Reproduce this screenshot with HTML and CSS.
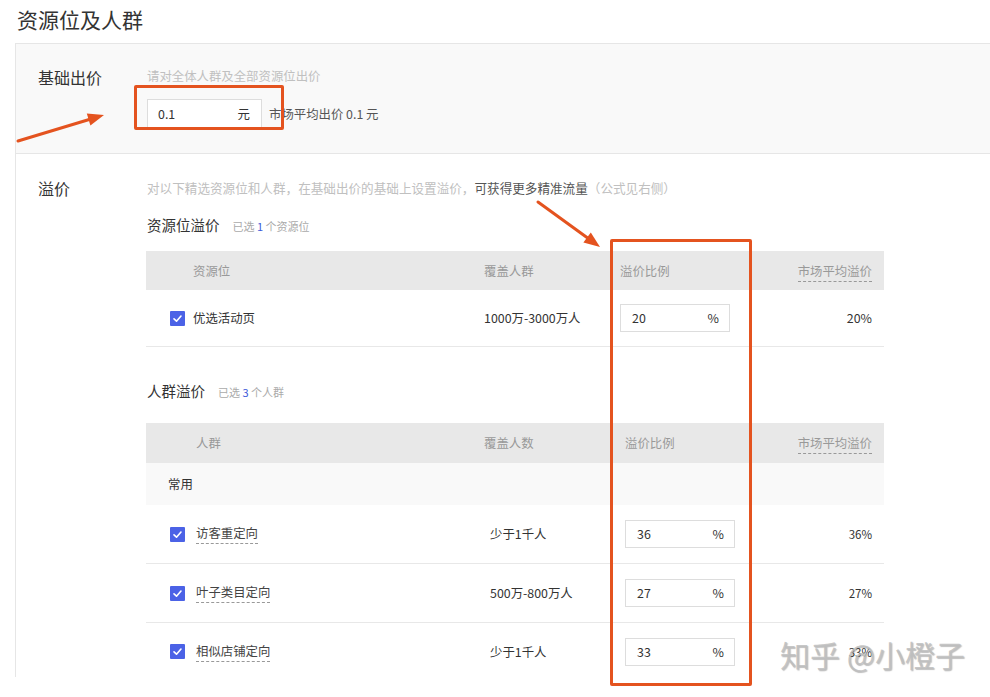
FILE: index.html
```html
<!DOCTYPE html>
<html lang="zh-CN">
<head>
<meta charset="utf-8">
<title>资源位及人群</title>
<link rel="stylesheet" href="styles.css">
</head>
<body>
<div class="page">
  <h1 class="title">资源位及人群</h1>
  <div class="panel">
    <section class="base">
      <div class="label">基础出价</div>
      <div class="content">
        <div class="hint">请对全体人群及全部资源位出价</div>
        <div class="bid-row">
          <div class="input input-base"><span>0.1</span><span>元</span></div>
          <span class="market">市场平均出价 0.1 元</span>
        </div>
      </div>
    </section>
    <section class="premium">
      <div class="label">溢价</div>
      <div class="content">
        <div class="hint hint-premium">对以下精选资源位和人群，在基础出价的基础上设置溢价，<span class="strong">可获得更多精准流量</span>（公式见右侧）</div>

        <div class="sub-title sub-first">资源位溢价<span class="count">已选 <b>1</b> 个资源位</span></div>
        <div class="table t1">
          <div class="row head">
            <div class="cell c1">资源位</div>
            <div class="cell">覆盖人群</div>
            <div class="cell">溢价比例</div>
            <div class="cell c4"><span class="dashed">市场平均溢价</span></div>
          </div>
          <div class="row item">
            <div class="cell c1"><span class="check"><svg viewBox="0 0 15 15" width="15" height="15"><path d="M4 7.8 L6.5 10.2 L11 5" fill="none" stroke="#fff" stroke-width="1.6" stroke-linecap="round" stroke-linejoin="round"/></svg></span><span>优选活动页</span></div>
            <div class="cell">1000万-3000万人</div>
            <div class="cell"><div class="input input-pct"><span>20</span><span>%</span></div></div>
            <div class="cell c4">20%</div>
          </div>
        </div>

        <div class="sub-title sub-second">人群溢价<span class="count">已选 <b>3</b> 个人群</span></div>
        <div class="table t2">
          <div class="row head">
            <div class="cell c1">人群</div>
            <div class="cell">覆盖人数</div>
            <div class="cell">溢价比例</div>
            <div class="cell c4"><span class="dashed">市场平均溢价</span></div>
          </div>
          <div class="group">常用</div>
          <div class="row item">
            <div class="cell c1"><span class="check"><svg viewBox="0 0 15 15" width="15" height="15"><path d="M4 7.8 L6.5 10.2 L11 5" fill="none" stroke="#fff" stroke-width="1.6" stroke-linecap="round" stroke-linejoin="round"/></svg></span><span class="dashed name">访客重定向</span></div>
            <div class="cell data2">少于1千人</div>
            <div class="cell"><div class="input input-pct"><span>36</span><span>%</span></div></div>
            <div class="cell c4 small">36%</div>
          </div>
          <div class="row item">
            <div class="cell c1"><span class="check"><svg viewBox="0 0 15 15" width="15" height="15"><path d="M4 7.8 L6.5 10.2 L11 5" fill="none" stroke="#fff" stroke-width="1.6" stroke-linecap="round" stroke-linejoin="round"/></svg></span><span class="dashed name">叶子类目定向</span></div>
            <div class="cell data2">500万-800万人</div>
            <div class="cell"><div class="input input-pct"><span>27</span><span>%</span></div></div>
            <div class="cell c4 small">27%</div>
          </div>
          <div class="row item last">
            <div class="cell c1"><span class="check"><svg viewBox="0 0 15 15" width="15" height="15"><path d="M4 7.8 L6.5 10.2 L11 5" fill="none" stroke="#fff" stroke-width="1.6" stroke-linecap="round" stroke-linejoin="round"/></svg></span><span class="dashed name">相似店铺定向</span></div>
            <div class="cell data2">少于1千人</div>
            <div class="cell"><div class="input input-pct"><span>33</span><span>%</span></div></div>
            <div class="cell c4 small">33%</div>
          </div>
        </div>
      </div>
    </section>
  </div>

  <div class="annot annot-base"></div>
  <div class="annot annot-col"></div>
  <svg class="arrows" width="990" height="697" viewBox="0 0 990 697">
    <line x1="18" y1="141" x2="90" y2="119.3" stroke="#e4531f" stroke-width="3" stroke-linecap="round"/>
    <polygon points="104,115 90.4,125.6 86.8,113.6" fill="#e4531f"/>
    <line x1="538" y1="202" x2="588" y2="238.3" stroke="#e4531f" stroke-width="3" stroke-linecap="round"/>
    <polygon points="600,247 583.4,242.6 590.8,232.5" fill="#e4531f"/>
  </svg>
  <div class="watermark">知乎 @小橙子</div>
</div>
</body>
</html>
```

FILE: styles.css
```css
* { box-sizing: border-box; }

body {
  margin: 0;
  background: #fff;
  color: #333;
  font-family: "Noto Sans CJK SC", "Noto Sans", "Liberation Sans", sans-serif;
}

.page {
  position: relative;
  width: 990px;
  height: 697px;
  overflow: hidden;
}

.title {
  margin: 0;
  padding: 5px 0 10px 17px;
  font-size: 21px;
  font-weight: normal;
  line-height: 28px;
  color: #333;
}

.panel {
  margin-left: 15px;
  height: 634px;
  border-left: 1px solid #e6e6e6;
  border-top: 1px solid #e6e6e6;
}

.label {
  flex: 0 0 131px;
  padding-left: 22px;
  font-size: 16px;
  line-height: 20px;
  color: #333;
}

.content {
  flex: 1;
}

.base {
  display: flex;
  height: 110px;
  padding-top: 23px;
  background: #f9f9f9;
  border-bottom: 1px solid #e6e6e6;
}

.hint {
  font-size: 12.4px;
  line-height: 18px;
  color: #c0c0c0;
}

.hint-premium {
  font-size: 12.6px;
  line-height: 20px;
}

.hint .strong {
  color: #555;
}

.bid-row {
  display: flex;
  align-items: center;
  gap: 7px;
  margin-top: 14px;
}

.input {
  display: flex;
  align-items: center;
  justify-content: space-between;
  background: #fff;
  border: 1px solid #ddd;
  font-size: 12.4px;
  color: #333;
}

.input-base {
  width: 115px;
  height: 30px;
  padding: 0 11px 0 10px;
}

.market {
  font-size: 12.4px;
  color: #555;
}

.premium {
  display: flex;
  padding-top: 24px;
}

.sub-title {
  display: flex;
  align-items: baseline;
  font-size: 14.5px;
  line-height: 20px;
  color: #333;
}

.sub-first { margin-top: 17px; }
.sub-second { margin-top: 34px; }

.count {
  margin-left: 13px;
  font-size: 11px;
  color: #aaa;
}

.count b {
  font-weight: normal;
  color: #3d5bd9;
}

.table {
  width: 738px;
  margin-left: -1px;
  margin-top: 15px;
  font-size: 12.4px;
}

.t2 { margin-top: 21px; }

.row {
  display: grid;
  align-items: center;
}

.t1 .row { grid-template-columns: 338px 136px 1fr 1fr; }
.t2 .row { grid-template-columns: 338px 141px 1fr 1fr; }

.row.head {
  height: 39px;
  background: #e8e8e8;
  color: #999;
}

.t2 .row.head { height: 40px; }

.row.head .c1 { padding-left: 47px; }
.t2 .row.head .c1 { padding-left: 50px; }

.row.item {
  height: 57px;
  border-bottom: 1px solid #e8e8e8;
}

.t2 .row.item { height: 59px; }
.t2 .row.item.last { height: 57px; border-bottom: none; }

.t2 .cell.data2 { padding-left: 6px; }

.row.item .c1 {
  display: flex;
  align-items: center;
  gap: 8px;
  padding-left: 24px;
  color: #333;
}

.t2 .row.item .c1 { gap: 11px; }

.c4 {
  text-align: right;
  padding-right: 12px;
}

.small { font-size: 11.5px; }

.dashed {
  border-bottom: 1px dashed #999;
  padding-bottom: 1px;
}

.name { color: #444; }

.check {
  display: block;
  width: 15px;
  height: 15px;
  background: #4b62e6;
  border-radius: 1px;
}

.check svg { display: block; }

.input-pct {
  width: 110px;
  height: 28px;
  padding: 0 10px 0 11px;
}

.group {
  height: 42px;
  display: flex;
  align-items: center;
  padding-left: 22px;
  background: #f9f9f9;
  color: #333;
}

.annot {
  position: absolute;
  border: 3px solid #e4531f;
  border-radius: 2px;
}

.annot-base {
  left: 134px;
  top: 85px;
  width: 150px;
  height: 45px;
}

.annot-col {
  left: 610px;
  top: 239px;
  width: 142px;
  height: 447px;
}

.arrows {
  position: absolute;
  left: 0;
  top: 0;
  pointer-events: none;
}

.watermark {
  position: absolute;
  left: 780px;
  top: 636px;
  font-size: 30px;
  line-height: 36px;
  color: rgba(190, 190, 190, 0.85);
  text-shadow: 1px 1px 1px rgba(0, 0, 0, 0.25);
  white-space: nowrap;
}
```
